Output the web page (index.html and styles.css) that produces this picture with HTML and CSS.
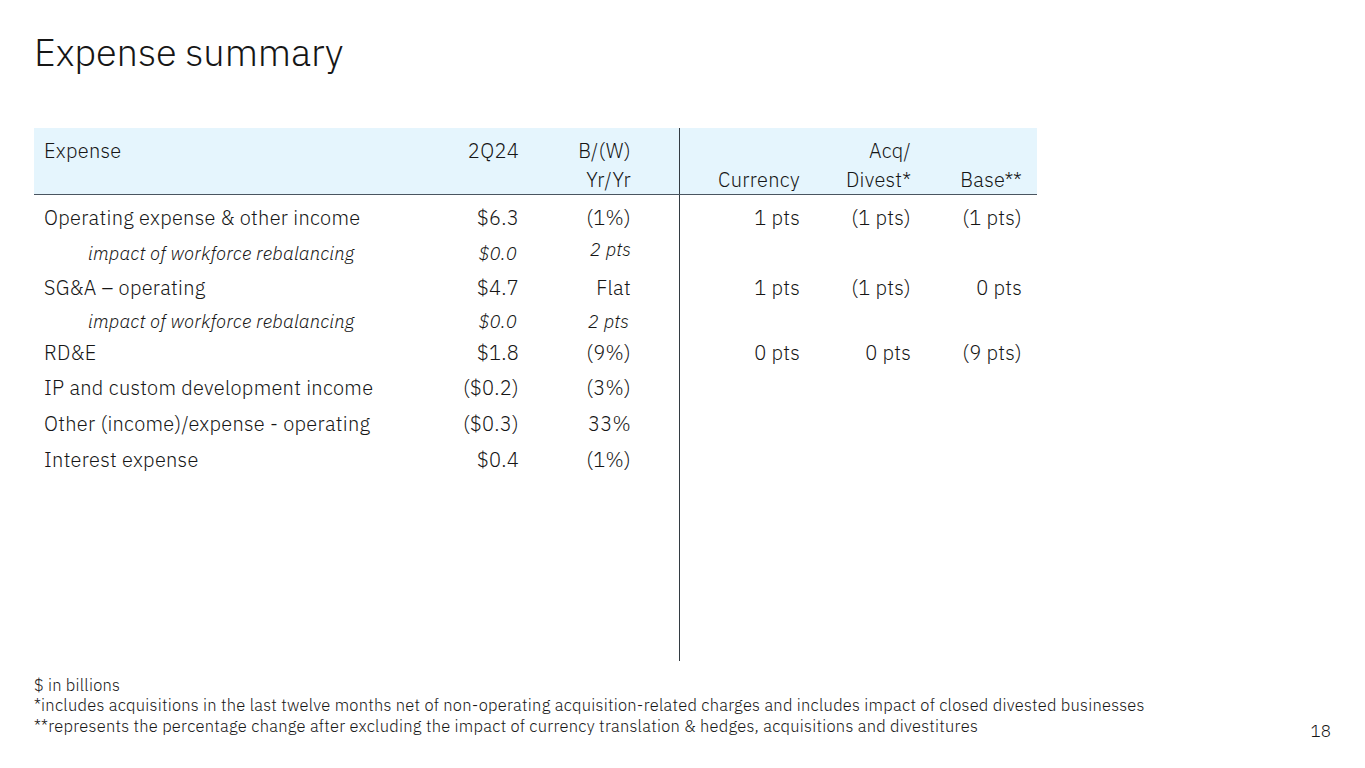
FILE: index.html
```html
<!DOCTYPE html>
<html lang="en">
<head>
<meta charset="utf-8">
<title>Expense summary</title>
<link rel="stylesheet" href="styles.css">
</head>
<body>
<div class="slide">
  <h1 class="title">Expense summary</h1>
  <table class="expense">
    <colgroup>
      <col class="c-label"><col class="c-q"><col class="c-bw"><col class="c-gap"><col class="c-cur"><col class="c-acq"><col class="c-base">
    </colgroup>
    <thead>
      <tr>
        <th class="lbl top">Expense</th>
        <th class="num top">2Q24</th>
        <th class="num top">B/(W)<br>Yr/Yr</th>
        <th class="gap"></th>
        <th class="num div bot">Currency</th>
        <th class="num bot">Acq/<br>Divest*</th>
        <th class="num bot last">Base**</th>
      </tr>
    </thead>
    <tbody>
      <tr class="spacer"><td colspan="4"></td><td class="div" colspan="3"></td></tr>
      <tr class="row">
        <td class="lbl">Operating expense &amp; other income</td>
        <td class="num">$6.3</td>
        <td class="num">(1%)</td>
        <td class="gap"></td>
        <td class="num div">1 pts</td>
        <td class="num">(1 pts)</td>
        <td class="num last">(1 pts)</td>
      </tr>
      <tr class="sub">
        <td class="lbl">impact of workforce rebalancing</td>
        <td class="num">$0.0</td>
        <td class="num raised">2 pts</td>
        <td class="gap"></td>
        <td class="div" colspan="3"></td>
      </tr>
      <tr class="row">
        <td class="lbl">SG&amp;A – operating</td>
        <td class="num">$4.7</td>
        <td class="num">Flat</td>
        <td class="gap"></td>
        <td class="num div">1 pts</td>
        <td class="num">(1 pts)</td>
        <td class="num last">0 pts</td>
      </tr>
      <tr class="sub tight">
        <td class="lbl">impact of workforce rebalancing</td>
        <td class="num">$0.0</td>
        <td class="num">2 pts</td>
        <td class="gap"></td>
        <td class="div" colspan="3"></td>
      </tr>
      <tr class="row short">
        <td class="lbl">RD&amp;E</td>
        <td class="num">$1.8</td>
        <td class="num">(9%)</td>
        <td class="gap"></td>
        <td class="num div">0 pts</td>
        <td class="num">0 pts</td>
        <td class="num last">(9 pts)</td>
      </tr>
      <tr class="row">
        <td class="lbl">IP and custom development income</td>
        <td class="num">($0.2)</td>
        <td class="num">(3%)</td>
        <td class="gap"></td>
        <td class="div" colspan="3"></td>
      </tr>
      <tr class="row">
        <td class="lbl">Other (income)/expense - operating</td>
        <td class="num">($0.3)</td>
        <td class="num">33%</td>
        <td class="gap"></td>
        <td class="div" colspan="3"></td>
      </tr>
      <tr class="row">
        <td class="lbl">Interest expense</td>
        <td class="num">$0.4</td>
        <td class="num">(1%)</td>
        <td class="gap"></td>
        <td class="div" colspan="3"></td>
      </tr>
      <tr class="filler"><td colspan="4"></td><td class="div" colspan="3"></td></tr>
    </tbody>
  </table>
  <div class="foot">
    <div class="notes">
      <p>$ in billions</p>
      <p>*includes acquisitions in the last twelve months net of non-operating acquisition-related charges and includes impact of closed divested businesses</p>
      <p>**represents the percentage change after excluding the impact of currency translation &amp; hedges, acquisitions and divestitures</p>
    </div>
    <div class="page">18</div>
  </div>
</div>
</body>
</html>
```

FILE: styles.css
```css
* { box-sizing: border-box; }
html, body { margin: 0; padding: 0; background: #ffffff; }
body {
  font-family: "IBM Plex Sans", "Open Sans", "Noto Sans", sans-serif;
  font-weight: 300;
  color: #161616;
  width: 1365px;
  height: 768px;
  overflow: hidden;
}
.slide {
  padding: 27px 0 0 34px;
  width: 1365px;
  height: 768px;
  display: flex;
  flex-direction: column;
}
.title {
  margin: 0;
  font-size: 38px;
  font-weight: 300;
  line-height: 50px;
  color: #161616;
  letter-spacing: -0.1px;
}
.expense {
  margin-top: 51px;
  border-collapse: collapse;
  table-layout: fixed;
  width: 1003px;
  font-size: 20px;
  letter-spacing: 0.3px;
}
.c-label { width: 396px; }
.c-q { width: 99px; }
.c-bw { width: 112px; }
.c-gap { width: 38px; }
.c-cur { width: 131px; }
.c-acq { width: 111px; }
.c-base { width: 116px; }
th, td { padding: 0; white-space: nowrap; }
thead th {
  background: #e5f5fd;
  font-weight: 300;
  line-height: 29px;
  height: 64px;
  border-bottom: 1px solid #4a5560;
}
th.top { vertical-align: top; padding-top: 8px; }
th.bot { vertical-align: bottom; padding-bottom: 0px; }
.lbl { text-align: left; padding-left: 10px; }
.num { text-align: right; padding-right: 10px; }
.last { padding-right: 15px; }
.div { border-left: 1px solid #333b42; }
.spacer td { height: 5px; }
.row td { height: 36px; vertical-align: middle; }
.row.short td { height: 34px; }
.sub td {
  height: 34px;
  font-style: italic;
  font-size: 18.5px;
  letter-spacing: 0.2px;
}
.sub.tight td { height: 30px; }
.sub td.lbl { padding-left: 54px; }
.sub td.num { padding-right: 12px; }
.sub td.raised { padding-bottom: 8px; padding-right: 10px; }
.sub td.div { font-style: normal; }
.filler td { height: 183px; }
.foot {
  margin-top: 14px;
  display: flex;
  align-items: flex-end;
  justify-content: space-between;
  width: 1297px;
}
.notes p {
  margin: 0;
  font-size: 16.5px;
  line-height: 20.7px;
  letter-spacing: 0.25px;
}
.page {
  font-size: 17px;
  line-height: 20px;
  margin-bottom: -4px;
}
```
